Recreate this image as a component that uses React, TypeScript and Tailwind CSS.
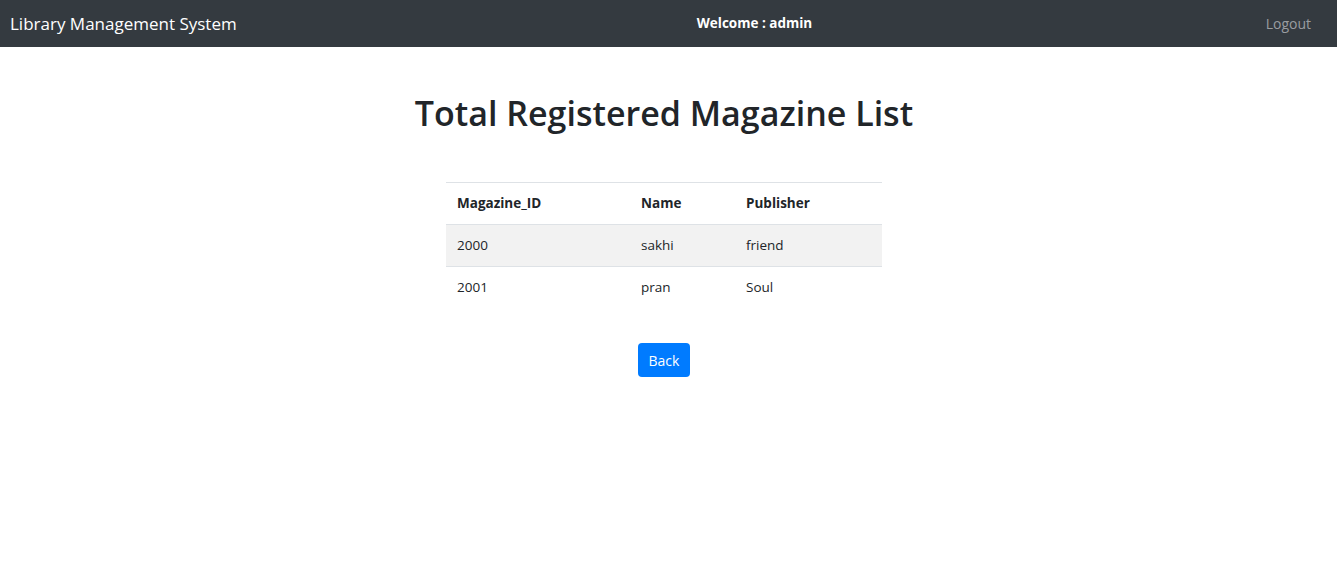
import React from "react";

const magazines = [
  { id: "2000", name: "sakhi", publisher: "friend" },
  { id: "2001", name: "pran", publisher: "Soul" },
];

export default function App() {
  return (
    <div className="min-h-[576px] bg-white text-[#212529] font-['Open_Sans',_'Noto_Sans',_sans-serif]">
      {/* Navbar */}
      <nav className="h-[47px] bg-[#343a40] flex items-center px-[10px]">
        <div className="flex-1 text-white text-[17px] leading-none">Library Management System</div>
        <div className="text-white font-bold text-[13.5px] pl-[188px]">Welcome : admin</div>
        <div className="flex-1 flex justify-end pr-[16px]">
          <a className="text-[14px] text-[#9a9da0] cursor-pointer">Logout</a>
        </div>
      </nav>

      {/* Content */}
      <div className="flex flex-col items-center pr-[9px]">
        <h1 className="mt-[42px] text-[34px] leading-[48px] font-semibold">Total Registered Magazine List</h1>

        <table className="mt-[45px] w-[436px] text-[13.5px] border-collapse">
          <thead>
            <tr className="border-t border-[#dee2e6]">
              <th className="w-[184px] text-left font-bold px-[11px] py-[12px] leading-[17px]">Magazine_ID</th>
              <th className="w-[105px] text-left font-bold px-[11px] py-[12px] leading-[17px]">Name</th>
              <th className="text-left font-bold px-[11px] py-[12px] leading-[17px]">Publisher</th>
            </tr>
          </thead>
          <tbody>
            {magazines.map((m, i) => (
              <tr key={m.id} className={`border-t border-[#dee2e6] ${i % 2 === 0 ? "bg-[#f2f2f2]" : ""}`}>
                <td className="px-[11px] py-[12px] leading-[17px]">{m.id}</td>
                <td className="px-[11px] py-[12px] leading-[17px]">{m.name}</td>
                <td className="px-[11px] py-[12px] leading-[17px]">{m.publisher}</td>
              </tr>
            ))}
          </tbody>
        </table>

        <button className="mt-[35px] h-[34px] px-[11px] rounded-[4px] bg-[#007bff] text-white text-[14px]">Back</button>
      </div>
    </div>
  );
}
